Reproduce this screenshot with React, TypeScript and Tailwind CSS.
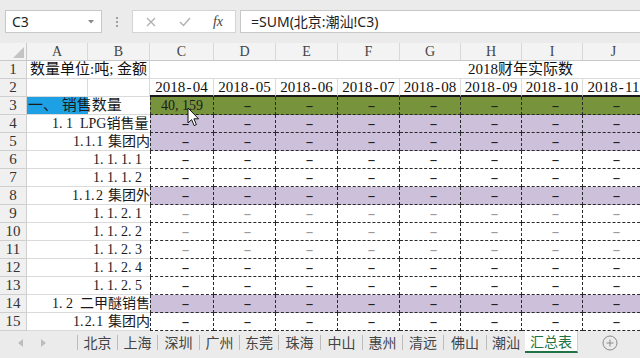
import React from "react";

const SERIF = "font-['Liberation_Serif','Noto_Sans_CJK_SC',serif]";
const UI = "font-['Noto_Sans','Noto_Sans_CJK_SC',sans-serif]";

const COLS = [
  { key: "C", w: "w-[64px]", month: "2018-04" },
  { key: "D", w: "w-[62px]", month: "2018-05" },
  { key: "E", w: "w-[62px]", month: "2018-06" },
  { key: "F", w: "w-[62px]", month: "2018-07" },
  { key: "G", w: "w-[61px]", month: "2018-08" },
  { key: "H", w: "w-[61px]", month: "2018-09" },
  { key: "I", w: "w-[61px]", month: "2018-10" },
  { key: "J", w: "w-[62px]", month: "2018-11" },
];

type Fill = "lilac" | "none";

interface DataRow {
  n: number;
  label: string;
  pad: string;
  fill: Fill;
  faint?: boolean;
}

const ROWS: DataRow[] = [
  { n: 4, label: "1.1 LPG销售量", pad: "pl-[25px]", fill: "lilac" },
  { n: 5, label: "1.1.1 集团内", pad: "pl-[46px]", fill: "lilac" },
  { n: 6, label: "1.1.1.1", pad: "pl-[66px]", fill: "none" },
  { n: 7, label: "1.1.1.2", pad: "pl-[66px]", fill: "none" },
  { n: 8, label: "1.1.2 集团外", pad: "pl-[45px]", fill: "lilac" },
  { n: 9, label: "1.1.2.1", pad: "pl-[66px]", fill: "none", faint: true },
  { n: 10, label: "1.1.2.2", pad: "pl-[66px]", fill: "none", faint: true },
  { n: 11, label: "1.1.2.3", pad: "pl-[66px]", fill: "none", faint: true },
  { n: 12, label: "1.1.2.4", pad: "pl-[66px]", fill: "none" },
  { n: 13, label: "1.1.2.5", pad: "pl-[66px]", fill: "none" },
  { n: 14, label: "1.2 二甲醚销售", pad: "pl-[25px]", fill: "lilac" },
  { n: 15, label: "1.2.1 集团内", pad: "pl-[46px]", fill: "none" },
];

const TABS = [
  { name: "北京", w: "w-[39px]" },
  { name: "上海", w: "w-[39px]" },
  { name: "深圳", w: "w-[41px]" },
  { name: "广州", w: "w-[39px]" },
  { name: "东莞", w: "w-[38px]" },
  { name: "珠海", w: "w-[41px]" },
  { name: "中山", w: "w-[41px]" },
  { name: "惠州", w: "w-[39px]" },
  { name: "清远", w: "w-[40px]" },
  { name: "佛山", w: "w-[42px]" },
  { name: "潮汕", w: "w-[38px]" },
];

// SimSun-style half-width punctuation so dotted numbers keep their spacing
function Half({ s, unit }: { s: string; unit: string }) {
  return (
    <>
      {Array.from(s).map((ch, i) =>
        ".,- ".includes(ch) ? (
          <span key={i} className={`inline-block ${ch === "-" ? "text-center" : "text-left"} ${unit}`}>
            {ch === " " ? "\u00a0" : ch}
          </span>
        ) : (
          <React.Fragment key={i}>{ch}</React.Fragment>
        )
      )}
    </>
  );
}

const RowNum = ({ n }: { n: number }) => (
  <div className={`w-[27px] h-full shrink-0 bg-[#f0f0f0] border-r border-b border-[#cfcfcf] flex items-center justify-center text-[15px] text-[#333] ${SERIF}`}>
    {n}
  </div>
);

const Dash = ({ faint }: { faint?: boolean }) => (
  <span className={`ml-[6px] inline-block scale-x-[1.6] text-[15px] ${faint ? "text-[#9a9a9a]" : "text-[#222]"}`}>-</span>
);

const FormulaBar = () => (
  <div className={`h-[43px] shrink-0 bg-[#ebebeb] flex items-start pt-[10px] pl-[5px] ${UI}`}>
    <div className="w-[97px] h-[23px] bg-white border border-[#c8c8c8] flex items-center justify-between pl-[6px] pr-[7px]">
      <span className="text-[14px] text-[#222]">C3</span>
      <svg width="6" height="4" viewBox="0 0 6 4">
        <path d="M0 0 L6 0 L3 3.5 Z" fill="#8a8a8a" />
      </svg>
    </div>
    <div className="w-[30px] h-[23px] flex flex-col items-center justify-center gap-[2px]">
      <span className="w-[2px] h-[2px] bg-[#a0a0a0]" />
      <span className="w-[2px] h-[2px] bg-[#a0a0a0]" />
      <span className="w-[2px] h-[2px] bg-[#a0a0a0]" />
    </div>
    <div className="w-[104px] h-[23px] bg-white border border-[#d4d4d4] flex items-center">
      <div className="w-[36px] flex justify-center">
        <svg width="10" height="10" viewBox="0 0 10 10">
          <path d="M1 1 L9 9 M9 1 L1 9" stroke="#b0b0b0" strokeWidth="1.3" />
        </svg>
      </div>
      <div className="w-[32px] flex justify-center">
        <svg width="12" height="10" viewBox="0 0 12 10">
          <path d="M1 5 L4.5 8.5 L11 1" stroke="#b0b0b0" strokeWidth="1.4" fill="none" />
        </svg>
      </div>
      <div className="w-[34px] flex justify-center">
        <span className="italic text-[14px] text-[#444] font-['Liberation_Serif',serif]">fx</span>
      </div>
    </div>
    <div className="ml-[4px] flex-1 h-[23px] bg-white border border-r-0 border-[#c8c8c8] flex items-center pl-[10px]">
      <span className="text-[14px] text-[#222]">=SUM(北京:潮汕!C3)</span>
    </div>
  </div>
);

const HeaderRow = () => (
  <div className={`h-[18px] shrink-0 flex bg-[#f3f3f3] border-b border-[#c8c8c8] text-[14px] text-[#444] ${SERIF}`}>
    <div className="w-[27px] shrink-0 border-r border-[#c8c8c8] flex items-end justify-end p-[2px]">
      <svg width="11" height="11" viewBox="0 0 11 11">
        <path d="M11 0 L11 11 L0 11 Z" fill="#c4c4c4" />
      </svg>
    </div>
    <div className="w-[61px] shrink-0 border-r border-[#d8d8d8] flex items-center justify-center">A</div>
    <div className="w-[62px] shrink-0 border-r border-[#d8d8d8] flex items-center justify-center">B</div>
    {COLS.map((c) => (
      <div key={c.key} className={`${c.w} shrink-0 border-r border-[#d8d8d8] flex items-center justify-center`}>
        {c.key}
      </div>
    ))}
  </div>
);

const Sheet = () => (
  <div className={`flex flex-col ${SERIF}`}>
    {/* row 1 */}
    <div className="h-[18px] flex">
      <RowNum n={1} />
      <div className="w-[123px] shrink-0 border-b border-r border-[#dadada] overflow-hidden whitespace-nowrap flex items-center pl-[3px] text-[15px] text-[#111]">
        数量单位:吨;&nbsp;金额
      </div>
      <div className="flex-1 shrink-0 border-b border-[#dadada] flex items-center pl-[318px] whitespace-nowrap text-[15px] text-[#111]">
        2018财年实际数
      </div>
    </div>
    {/* row 2 */}
    <div className="h-[18px] flex">
      <RowNum n={2} />
      <div className="w-[61px] shrink-0 border-b border-r border-[#dadada]" />
      <div className="w-[62px] shrink-0 border-b border-r border-[#dadada]" />
      {COLS.map((c) => (
        <div
          key={c.key}
          className={`${c.w} shrink-0 border-r border-[#dadada] border-b-2 border-b-[#1a1a1a] flex items-center justify-center whitespace-nowrap text-[15px] text-[#111]`}
        >
          <Half s={c.month} unit="w-[7.5px]" />
        </div>
      ))}
    </div>
    {/* row 3 */}
    <div className="h-[18px] flex">
      <RowNum n={3} />
      <div className="w-[123px] shrink-0 border-b border-[#dadada] bg-[linear-gradient(to_right,#1ea1e4_61px,#ffffff_61px)] flex items-center pl-[1px] whitespace-nowrap text-[15px] text-[#1a1a1a]">
        一、&nbsp;销售数量
      </div>
      {COLS.map((c, i) => (
        <div
          key={c.key}
          className={`${c.w} shrink-0 bg-[#77933c] border-dashed border-[#2a2a2a] border-r border-b ${i === 0 ? "border-l" : ""} flex items-center justify-center whitespace-nowrap text-[14px] text-[#1a1a1a]`}
        >
          {i === 0 ? <Half s="40,159" unit="w-[7px]" /> : <Dash />}
        </div>
      ))}
    </div>
    {ROWS.map((r) => (
      <div key={r.n} className="h-[18px] flex">
        <RowNum n={r.n} />
        <div className={`w-[123px] shrink-0 border-b border-[#dadada] overflow-hidden whitespace-nowrap flex items-center ${r.pad} text-[14px] text-[#1a1a1a]`}>
          <Half s={r.label} unit="w-[7px]" />
        </div>
        {COLS.map((c, i) => (
          <div
            key={c.key}
            className={`${c.w} shrink-0 ${r.fill === "lilac" ? "bg-[#ccc0da]" : "bg-white"} border-dashed border-[#2a2a2a] border-r border-b ${i === 0 ? "border-l" : ""} flex items-center justify-center`}
          >
            <Dash faint={r.faint} />
          </div>
        ))}
      </div>
    ))}
  </div>
);

const TabBar = () => (
  <div className={`flex-1 bg-[#ebebeb] flex items-start ${UI}`}>
    <div className="w-[77px] h-[23px] shrink-0 flex items-center">
      <svg className="ml-[18px]" width="5" height="8" viewBox="0 0 5 8">
        <path d="M5 0 L0 4 L5 8 Z" fill="#bdbdbd" />
      </svg>
      <svg className="ml-[18px]" width="5" height="8" viewBox="0 0 5 8">
        <path d="M0 0 L5 4 L0 8 Z" fill="#bdbdbd" />
      </svg>
    </div>
    {TABS.map((t) => (
      <div key={t.name} className="flex items-center h-[23px]">
        <span className="w-px h-[15px] bg-[#bcbcbc]" />
        <div className={`${t.w} flex items-center justify-center text-[14px] text-[#444]`}>{t.name}</div>
      </div>
    ))}
    <div className="w-[53px] h-[22px] bg-white border-b-2 border-[#217346] border-r border-r-[#d0d0d0] flex items-center justify-center text-[14px] text-[#217346]">
      汇总表
    </div>
    <div className="ml-[24px] h-[23px] flex items-center">
      <svg width="16" height="16" viewBox="0 0 16 16">
        <circle cx="8" cy="8" r="7" fill="none" stroke="#8a8a8a" strokeWidth="1" />
        <path d="M8 4.5 V11.5 M4.5 8 H11.5" stroke="#8a8a8a" strokeWidth="1" />
      </svg>
    </div>
  </div>
);

export default function App() {
  return (
    <div className="relative w-[640px] h-[358px] overflow-hidden bg-white flex flex-col">
      <FormulaBar />
      <HeaderRow />
      <Sheet />
      <TabBar />
      {/* mouse pointer over C3 */}
      <svg className="absolute left-[187px] top-[107px]" width="13" height="20" viewBox="0 0 13 20">
        <path d="M1 1 L1 16 L4.6 12.6 L7.2 18.6 L9.4 17.6 L6.9 11.8 L11.6 11.8 Z" fill="#ffffff" stroke="#111" strokeWidth="1" strokeLinejoin="round" />
      </svg>
    </div>
  );
}
